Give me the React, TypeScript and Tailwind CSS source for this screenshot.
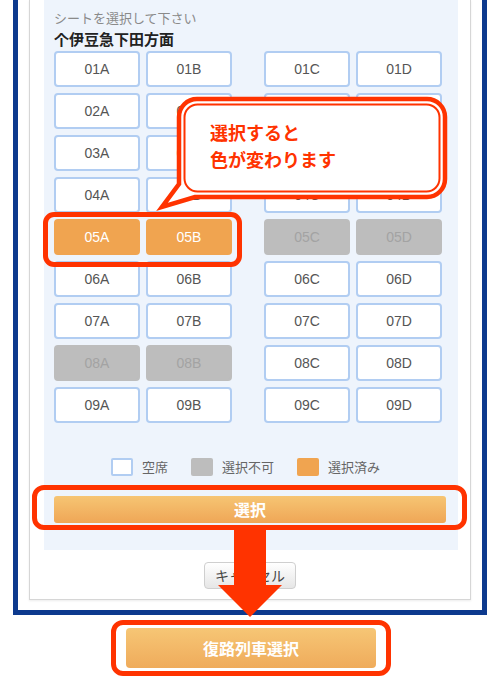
import React from "react";

type SeatState = "free" | "blocked" | "picked";

const rows = ["01", "02", "03", "04", "05", "06", "07", "08", "09"];

function seatState(id: string): SeatState {
  if (id === "05A" || id === "05B") return "picked";
  if (id === "05C" || id === "05D" || id === "08A" || id === "08B") return "blocked";
  return "free";
}

function Seat({ id }: { id: string }) {
  const state = seatState(id);
  const cls =
    state === "picked"
      ? "bg-[#f0a450] text-white border-[#f0a450]"
      : state === "blocked"
        ? "bg-[#bdbdbd] text-[#a3a3a3] border-[#bdbdbd]"
        : "bg-white text-[#555] border-[#b1cdf2]";
  return (
    <div
      className={`flex h-[36px] w-[86px] items-center justify-center rounded-[4px] border-2 font-['Liberation_Sans',sans-serif] text-[14px] ${cls}`}
    >
      {id}
    </div>
  );
}

function Legend({ box, label }: { box: string; label: string }) {
  return (
    <div className="flex items-center gap-[9px]">
      <span className={`block h-[18px] w-[22px] rounded-[2px] ${box}`} />
      <span className="text-[13px] text-[#666]">{label}</span>
    </div>
  );
}

export default function App() {
  return (
    <div className="relative h-[688px] w-[500px] overflow-hidden bg-white font-['Noto_Sans_CJK_JP','Liberation_Sans',sans-serif]">
      {/* modal frame */}
      <div className="mx-[13px] border-x-[5px] border-b-[5px] border-[#0d3a8e] bg-white px-[11px] pb-[10px]">
        <div className="border-x border-b border-[#d6d6d6] pb-[10px] shadow-[0_1px_2px_rgba(0,0,0,0.08)]">
          <div className="ml-[14px] mr-[12px] bg-[#eef4fc] pb-[27px] pl-[10px] pt-[10px]">
            <p className="text-[13px] leading-[16px] text-[#8a8a8a]">シートを選択して下さい</p>
            <p className="mt-[4px] text-[15px] font-bold leading-[18px] text-[#222]">个伊豆急下田方面</p>

            <div className="mt-[3px] flex flex-col gap-[6px]">
              {rows.map((r) => (
                <div key={r} className="flex">
                  <div className="flex gap-[6px]">
                    <Seat id={`${r}A`} />
                    <Seat id={`${r}B`} />
                  </div>
                  <div className="ml-[32px] flex gap-[6px]">
                    <Seat id={`${r}C`} />
                    <Seat id={`${r}D`} />
                  </div>
                </div>
              ))}
            </div>

            <div className="ml-[57px] mt-[34px] flex items-center gap-[23px]">
              <Legend box="border-2 border-[#b1cdf2] bg-white" label="空席" />
              <Legend box="bg-[#bdbdbd]" label="選択不可" />
              <Legend box="bg-[#f0a450]" label="選択済み" />
            </div>

            <button className="mt-[19px] flex h-[27px] w-[392px] items-center justify-center rounded-[3px] bg-gradient-to-b from-[#f6c573] to-[#efa656] text-[16px] font-bold text-white">
              選択
            </button>
          </div>

          <div className="mt-[12px] flex justify-center">
            <button className="flex h-[27px] w-[92px] items-center justify-center rounded-[4px] border border-[#cfcfcf] bg-gradient-to-b from-white to-[#e6e6e6] text-[14px] text-[#444]">
              キャンセル
            </button>
          </div>
        </div>
      </div>

      {/* return trip button */}
      <div className="mx-auto mt-[5px] w-[280px] translate-x-[1px] rounded-[12px] border-[5px] border-[#ff3300] px-[10px] py-[3px]">
        <button className="flex h-[40px] w-full items-center justify-center rounded-[4px] bg-gradient-to-b from-[#f6c675] to-[#efab5b] text-[16px] font-bold text-white">
          復路列車選択
        </button>
      </div>

      {/* annotations */}
      <div className="absolute left-[43px] top-[212px] h-[55px] w-[199px] rounded-[11px] border-[5px] border-[#ff3300]" />
      <div className="absolute left-[32px] top-[485px] h-[45px] w-[435px] rounded-[12px] border-[5px] border-[#ff3300]" />

      <svg className="absolute left-[155px] top-[90px]" width="300" height="125" viewBox="0 0 300 125">
        <path
          d="M 40 107 H 272 A 18 18 0 0 0 290 89 V 27 A 18 18 0 0 0 272 9 H 42 A 18 18 0 0 0 24 27 V 94 L 7 117 Z"
          fill="#fff"
          stroke="#ff3300"
          strokeWidth="4.5"
          strokeLinejoin="miter"
        />
        <rect x="29.5" y="14.5" width="255" height="87" rx="13" fill="none" stroke="#ff3300" strokeWidth="2" />
      </svg>
      <div className="absolute left-[210px] top-[119px] text-[18px] font-bold leading-[27px] text-[#ff3300]">
        選択すると
        <br />
        色が変わります
      </div>

      <svg className="absolute left-[218px] top-[529px]" width="64" height="89" viewBox="0 0 64 89">
        <polygon points="16,0 48,0 48,56 64,56 32,88 0,56 16,56" fill="#ff3300" />
      </svg>
    </div>
  );
}
